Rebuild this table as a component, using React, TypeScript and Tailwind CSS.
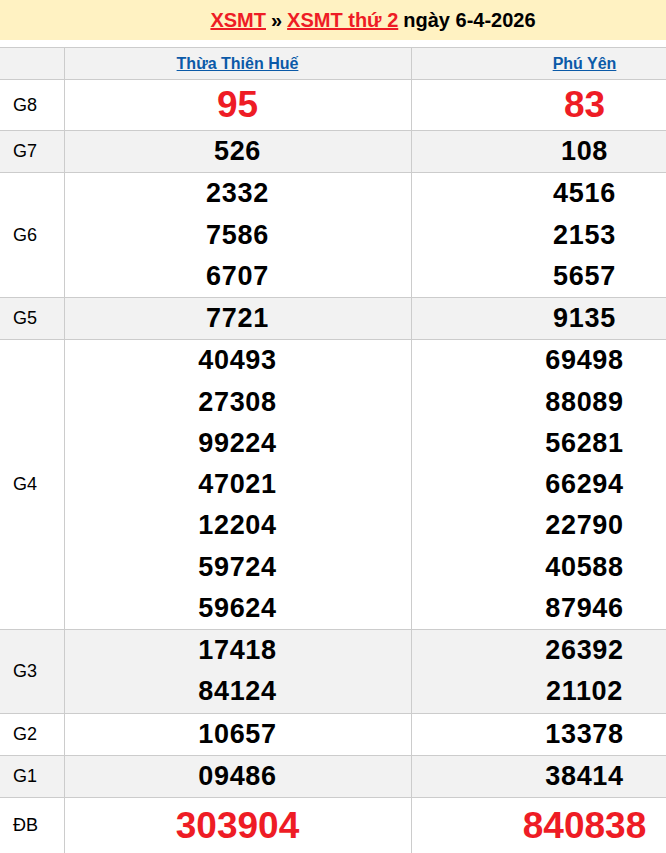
import React from "react";

type Row = { label: string; a: string[]; b: string[]; big?: boolean };

const rows: Row[] = [
  { label: "G8", a: ["95"], b: ["83"], big: true },
  { label: "G7", a: ["526"], b: ["108"] },
  { label: "G6", a: ["2332", "7586", "6707"], b: ["4516", "2153", "5657"] },
  { label: "G5", a: ["7721"], b: ["9135"] },
  {
    label: "G4",
    a: ["40493", "27308", "99224", "47021", "12204", "59724", "59624"],
    b: ["69498", "88089", "56281", "66294", "22790", "40588", "87946"],
  },
  { label: "G3", a: ["17418", "84124"], b: ["26392", "21102"] },
  { label: "G2", a: ["10657"], b: ["13378"] },
  { label: "G1", a: ["09486"], b: ["38414"] },
  { label: "ĐB", a: ["303904"], b: ["840838"], big: true },
];

const font = { fontFamily: '"Liberation Sans", Arial, sans-serif' };

export default function App() {
  return (
    <div className="w-[666px] min-h-[853px] overflow-hidden bg-white" style={font}>
      <div className="w-[758px]">
        <div className="flex h-[40px] w-[746px] items-center justify-center bg-[#fff2c2] text-[20px] font-bold text-black">
          <a href="#" className="text-[#ee1c25] underline">XSMT</a>
          <span className="mx-[5px]">»</span>
          <a href="#" className="text-[#ee1c25] underline">XSMT thứ 2</a>
          <span className="ml-[5px]">ngày 6-4-2026</span>
        </div>

        <table className="mt-[7px] w-[758px] table-fixed border-collapse">
          <colgroup>
            <col className="w-[64px]" />
            <col className="w-[347px]" />
            <col className="w-[347px]" />
          </colgroup>
          <thead>
            <tr className="h-[32px] bg-[#f2f2f2]">
              <th className="border border-l-0 border-[#cccccc]" />
              <th className="border border-[#cccccc] text-center text-[16px] font-bold">
                <a href="#" className="text-[#0b5aa8] underline">Thừa Thiên Huế</a>
              </th>
              <th className="border border-[#cccccc] text-center text-[16px] font-bold">
                <a href="#" className="text-[#0b5aa8] underline">Phú Yên</a>
              </th>
            </tr>
          </thead>
          <tbody>
            {rows.map((r, i) => (
              <tr key={r.label} className={i % 2 === 1 ? "bg-[#f2f2f2]" : "bg-white"}>
                <td className="border border-l-0 border-[#cccccc] pl-[13px] text-[18px] text-black">{r.label}</td>
                {[r.a, r.b].map((nums, j) => (
                  <td key={j} className="border border-[#cccccc] p-0 text-center">
                    {nums.map((n) =>
                      r.big ? (
                        <div key={n} className={`${r.label === "ĐB" ? "leading-[55px]" : "leading-[50px]"} text-[37px] font-bold text-[#ee1c25]`}>
                          {n}
                        </div>
                      ) : (
                        <div key={n} className="text-[27px] font-bold leading-[41.25px] tracking-[0.7px] text-black">
                          {n}
                        </div>
                      )
                    )}
                  </td>
                ))}
              </tr>
            ))}
          </tbody>
        </table>
      </div>
    </div>
  );
}
